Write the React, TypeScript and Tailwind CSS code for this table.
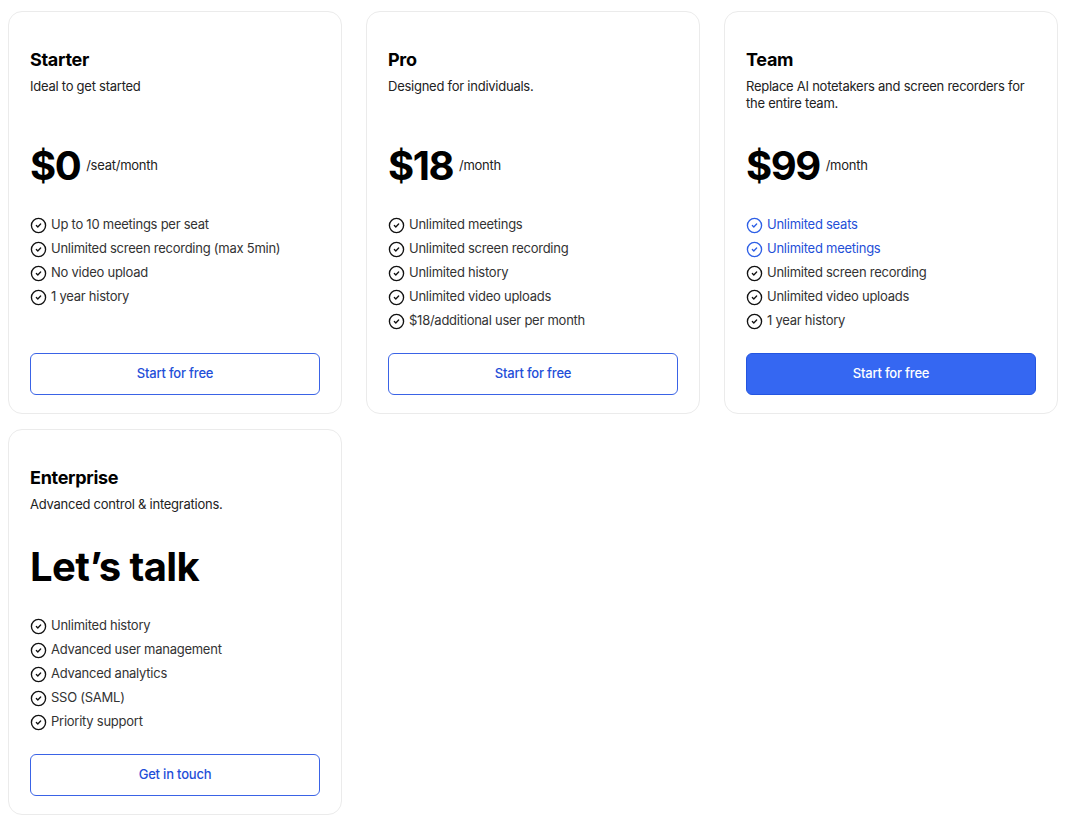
import { CircleCheck } from "lucide-react";

type Feature = { text: string; highlight?: boolean };

type Plan = {
  name: string;
  blurb: string;
  price: string;
  unit?: string;
  features: Feature[];
  cta: string;
  primary?: boolean;
  tallBlurb?: boolean;
};

const plans: Plan[] = [
  {
    name: "Starter",
    blurb: "Ideal to get started",
    price: "$0",
    unit: "/seat/month",
    features: [
      { text: "Up to 10 meetings per seat" },
      { text: "Unlimited screen recording (max 5min)" },
      { text: "No video upload" },
      { text: "1 year history" },
    ],
    cta: "Start for free",
    tallBlurb: true,
  },
  {
    name: "Pro",
    blurb: "Designed for individuals.",
    price: "$18",
    unit: "/month",
    features: [
      { text: "Unlimited meetings" },
      { text: "Unlimited screen recording" },
      { text: "Unlimited history" },
      { text: "Unlimited video uploads" },
      { text: "$18/additional user per month" },
    ],
    cta: "Start for free",
    tallBlurb: true,
  },
  {
    name: "Team",
    blurb: "Replace AI notetakers and screen recorders for the entire team.",
    price: "$99",
    unit: "/month",
    features: [
      { text: "Unlimited seats", highlight: true },
      { text: "Unlimited meetings", highlight: true },
      { text: "Unlimited screen recording" },
      { text: "Unlimited video uploads" },
      { text: "1 year history" },
    ],
    cta: "Start for free",
    primary: true,
    tallBlurb: true,
  },
  {
    name: "Enterprise",
    blurb: "Advanced control & integrations.",
    price: "Let’s talk",
    features: [
      { text: "Unlimited history" },
      { text: "Advanced user management" },
      { text: "Advanced analytics" },
      { text: "SSO (SAML)" },
      { text: "Priority support" },
    ],
    cta: "Get in touch",
  },
];

function PlanCard({ plan }: { plan: Plan }) {
  return (
    <div className="flex flex-col rounded-[14px] border border-[#ebebeb] bg-white px-[21px] pb-[18px] pt-[34px]">
      <h2 className="text-[18px] font-bold leading-[28px] tracking-[-0.3px] text-black">
        {plan.name}
      </h2>
      <p
        className={
          "mt-1 pr-2 text-[13px] leading-[17px] tracking-[-0.25px] text-[#222] " +
          (plan.tallBlurb ? "min-h-[34px]" : "")
        }
      >
        {plan.blurb}
      </p>
      <div className="mt-[30px] flex h-[48px] items-center gap-[6px]">
        <span
          className={
            "text-[40px] font-bold leading-[48px] text-black " +
            (plan.unit ? "tracking-[-1.5px]" : "tracking-[-0.6px]")
          }
        >
          {plan.price}
        </span>
        {plan.unit && (
          <span className="text-[13px] tracking-[-0.25px] text-[#222]">
            {plan.unit}
          </span>
        )}
      </div>
      <ul className="mt-[23px] flex-1">
        {plan.features.map((f) => (
          <li
            key={f.text}
            className={
              "flex h-[24px] items-center gap-[4px] text-[13px] tracking-[-0.25px] " +
              (f.highlight ? "text-[#1f4fd8]" : "text-[#333]")
            }
          >
            <CircleCheck
              size={17}
              strokeWidth={1.9}
              className={f.highlight ? "text-[#2d5fe6]" : "text-[#111]"}
            />
            <span>{f.text}</span>
          </li>
        ))}
      </ul>
      <button
        className={
          "mt-[20px] h-[42px] w-full rounded-[6px] border text-[13px] font-medium tracking-[-0.2px] " +
          (plan.primary
            ? "border-[#2455e0] bg-[#3567f2] text-white"
            : "border-[#3a63e6] bg-white text-[#1f4fd8]")
        }
      >
        {plan.cta}
      </button>
    </div>
  );
}

export default function App() {
  return (
    <div
      className="min-h-screen bg-white pb-4 pl-2 pr-3 pt-[11px]"
      style={{ fontFamily: "Inter, 'Liberation Sans', sans-serif" }}
    >
      <div className="grid grid-cols-3 gap-x-6 gap-y-[15px]">
        {plans.map((p) => (
          <PlanCard key={p.name} plan={p} />
        ))}
      </div>
    </div>
  );
}
